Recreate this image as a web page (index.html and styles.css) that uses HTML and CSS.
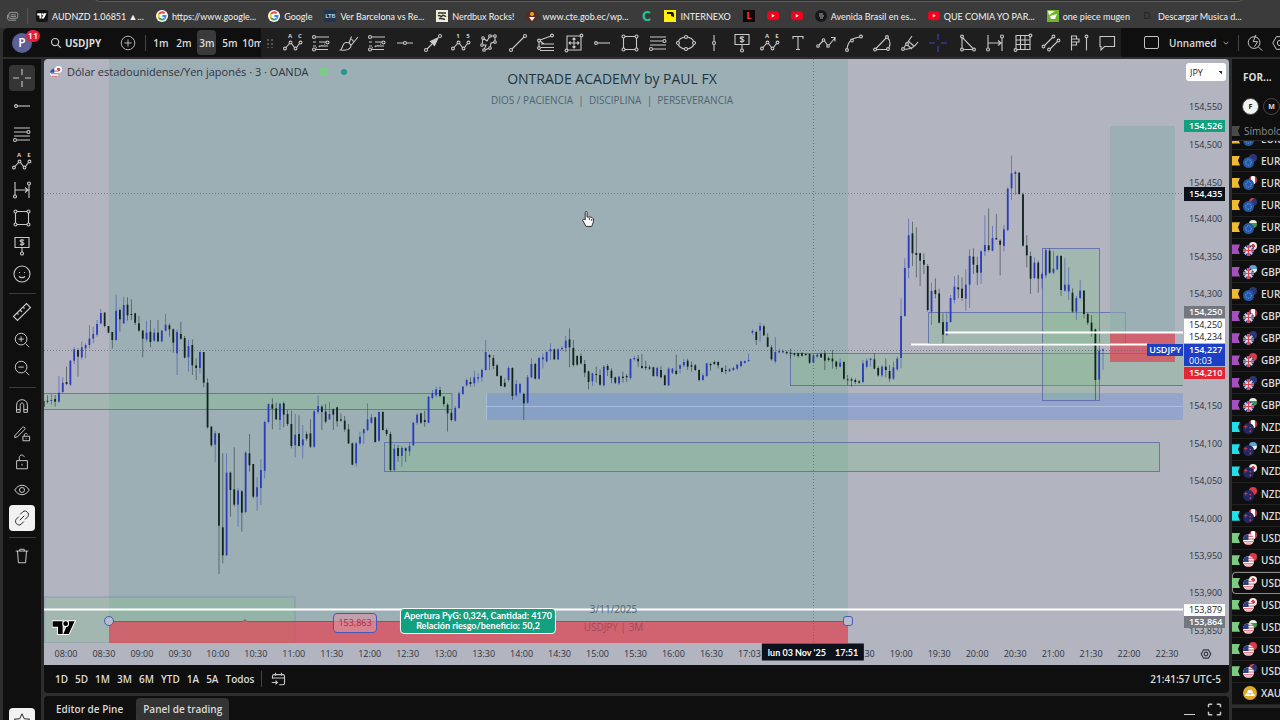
FILE: index.html
```html
<!DOCTYPE html>
<html lang="es">
<head>
    <meta charset="UTF-8">
    <meta name="viewport" content="width=device-width, initial-scale=1.0">
    <title>USDJPY 154,227 Unnamed</title>
    <link rel="stylesheet" href="styles.css">
</head>
<body>
    <!-- Icon sprite -->
    <svg class="sprite" aria-hidden="true">
        <symbol id="cross" viewBox="0 0 20 20"><path d="M10 1v6M10 13v6M1 10h6M13 10h6"/></symbol>
        <symbol id="ray" viewBox="0 0 20 20"><circle cx="4" cy="10" r="1.4"/><path d="M5.5 10H18"/></symbol>
        <symbol id="hline" viewBox="0 0 20 20"><circle cx="10" cy="10" r="1.5"/><path d="M2 10h6.500M11.500 10H18"/></symbol>
        <symbol id="vline" viewBox="0 0 20 20"><circle cx="10" cy="10" r="1.5"/><path d="M10 2v6.500M10 11.500V18"/></symbol>
        <symbol id="fib" viewBox="0 0 20 20"><path d="M2 4h16M2 8h13M2 12h16M5 16h13"/><circle cx="16.500" cy="8" r="1.500"/><circle cx="3" cy="16" r="1.500"/></symbol>
        <symbol id="fibext" viewBox="0 0 20 20"><path d="M4.500 4H18M2 9h3M8 9h7M2 13h3M8 13h9M4.500 16.500H17"/><path d="M5 15l9-4" stroke-dasharray="1 2"/><circle cx="3" cy="4" r="1.500"/><circle cx="16.500" cy="9.500" r="1.500"/><circle cx="3" cy="16.500" r="1.500"/></symbol>
        <symbol id="wave" viewBox="0 0 20 20"><path d="M3 14.500L6.500 10.500M8.500 10.500l3 4M13.500 14.500l3-4"/><circle cx="2" cy="15.500" r="1.400"/><circle cx="7.500" cy="9.500" r="1.400"/><circle cx="12.500" cy="15.500" r="1.400"/><circle cx="17.500" cy="9.500" r="1.400"/></symbol>
        <symbol id="brush" viewBox="0 0 20 20"><path d="M1.500 17C4 16 3 10 7 9.500c4-.5 6 3 4 5.500-2 2.500-6 2.500-9.500 2zM10 10l2.500-6.500M12 12.500l7-8.500M12.500 6l2 2.500"/></symbol>
        <symbol id="arrow" viewBox="0 0 20 20"><circle cx="3" cy="17" r="1.500"/><circle cx="17" cy="3" r="1.500"/><path d="M4 16l5-5"/><path class="solid" d="M15 5l-3.500 7.500-4-4z"/></symbol>
        <symbol id="path" viewBox="0 0 20 20"><path d="M4 5L8 8l3-5h5v6l-4 1-1 5-6 2 2-5H3z"/><circle class="knob" cx="4" cy="5" r="1.300"/><circle class="knob" cx="11" cy="3" r="1.300"/><circle class="knob" cx="16" cy="3" r="1.300"/><circle class="knob" cx="16" cy="9" r="1.300"/><circle class="knob" cx="11" cy="15" r="1.300"/><circle class="knob" cx="5" cy="17" r="1.300"/><circle class="knob" cx="3" cy="12" r="1.300"/></symbol>
        <symbol id="trend" viewBox="0 0 20 20"><circle cx="3" cy="17" r="1.500"/><circle cx="17" cy="3" r="1.500"/><path d="M4 16L16 4"/></symbol>
        <symbol id="fan" viewBox="0 0 20 20"><path d="M4 7L15 3M3 8.500v5M5 11h13M5 14.500h13M4 17.500h14M4 8l4 3"/><circle cx="3" cy="7.500" r="1.400"/><circle cx="16" cy="2.500" r="1.400"/><circle cx="3" cy="15" r="1.400"/></symbol>
        <symbol id="gann" viewBox="0 0 20 20"><path d="M3 3h14v14H3zM10 5v10M5 10h10M8.500 6.500L10 5l1.500 1.500M8.500 13.500L10 15l1.500-1.500M6.500 8.500L5 10l1.500 1.500M13.500 8.500L15 10l-1.500 1.500"/><circle class="knob" cx="17.500" cy="2.500" r="1.400"/><circle class="knob" cx="2.500" cy="17.500" r="1.400"/></symbol>
        <symbol id="rect" viewBox="0 0 20 20"><path d="M5 3.500h10M5 16.500h10M3.500 5v10M16.500 5v10"/><circle cx="3.500" cy="3.500" r="1.500"/><circle cx="16.500" cy="3.500" r="1.500"/><circle cx="3.500" cy="16.500" r="1.500"/><circle cx="16.500" cy="16.500" r="1.500"/></symbol>
        <symbol id="ellipse" viewBox="0 0 20 20"><ellipse cx="10" cy="10" rx="8" ry="6"/><circle class="knob" cx="10" cy="4" r="1.500"/><circle class="knob" cx="10" cy="16" r="1.500"/><circle class="knob" cx="2" cy="10" r="1.500"/><circle class="knob" cx="18" cy="10" r="1.500"/></symbol>
        <symbol id="note" viewBox="0 0 20 20"><path d="M3 1.500h14v10H3zM10 11.500V16M12 4.500c-1-1-4-1-4 .5s4 1 4 2.500-3 1.500-4 .5M10 3v7"/><circle cx="10" cy="17.500" r="1.500"/></symbol>
        <symbol id="text" viewBox="0 0 20 20"><path d="M5 6V3.500h10V6M10 3.500v13M8 16.500h4"/></symbol>
        <symbol id="zigarrow" viewBox="0 0 20 20"><path d="M3 12l4-4M8.500 8l3 4M13 12l6-7M15 4.500h4v4"/><circle cx="2" cy="13" r="1.300"/><circle cx="7.500" cy="7" r="1.300"/><circle cx="12" cy="13" r="1.300"/></symbol>
        <symbol id="curve" viewBox="0 0 20 20"><path d="M3 16C4 8 8 5 16 4"/><circle class="knob" cx="3" cy="17" r="1.400"/><circle class="knob" cx="8" cy="7.500" r="1.400"/><circle class="knob" cx="17" cy="3.500" r="1.400"/></symbol>
        <symbol id="arc" viewBox="0 0 20 20"><path d="M3 16.500L15 4C19 8 19 14 15 16.500z"/><circle class="knob" cx="3" cy="16.500" r="1.400"/><circle class="knob" cx="15" cy="4" r="1.400"/><circle class="knob" cx="16" cy="16" r="1.400"/></symbol>
        <symbol id="fork" viewBox="0 0 20 20"><path d="M3 16L12 3M3 16c6 1 11-1 15-7M6 11l6 5M8 8l6 5"/><circle class="knob" cx="3" cy="16" r="1.400"/><circle class="knob" cx="7" cy="11" r="1.400"/></symbol>
        <symbol id="triangle" viewBox="0 0 20 20"><path d="M5 4v12.500h12z"/><circle class="knob" cx="5" cy="3.500" r="1.400"/><circle class="knob" cx="5" cy="16.500" r="1.400"/><circle class="knob" cx="17" cy="16.500" r="1.400"/></symbol>
        <symbol id="range" viewBox="0 0 20 20"><path d="M3 2v13M17 5v13M3 10h13M13 7.500l3 2.500-3 2.500"/><circle class="knob" cx="3" cy="16.500" r="1.500"/><circle class="knob" cx="17" cy="3.500" r="1.500"/></symbol>
        <symbol id="grid" viewBox="0 0 20 20"><path d="M3 2.500h14v14H3zM7.500 2.500v14M12 2.500v14M3 7h14M3 11.500h14"/><circle class="knob" cx="17.500" cy="2.500" r="1.400"/><circle class="knob" cx="2.500" cy="17" r="1.400"/></symbol>
        <symbol id="channel" viewBox="0 0 20 20"><path d="M3 13l9-9M8 17l9-9"/><circle class="knob" cx="2.500" cy="13.500" r="1.400"/><circle class="knob" cx="12.500" cy="3.500" r="1.400"/><circle class="knob" cx="8" cy="16.500" r="1.400"/><circle class="knob" cx="17.500" cy="7.500" r="1.400"/></symbol>
        <symbol id="profile" viewBox="0 0 20 20"><path d="M2.500 17.500V3h5v3H10v3H7.500v3H2.500M2.500 6h5M2.500 9h5M17.500 5v12.500"/><circle class="knob" cx="17.500" cy="3.500" r="1.400"/></symbol>
        <symbol id="comment" viewBox="0 0 20 20"><path d="M3 3.500h14.500v10H7.500L4 17v-3.500H3z"/></symbol>
        <symbol id="smile" viewBox="0 0 20 20"><circle cx="10" cy="10" r="8"/><path d="M7.500 8v1M12.500 8v1M7 12.500c1.500 1.500 4.500 1.500 6 0"/></symbol>
        <symbol id="ruler" viewBox="0 0 20 20"><path d="M1.500 14.500l13-13 4 4-13 13zM5 11l1.500 1.500M8 8l2 2M11 5l1.500 1.500"/></symbol>
        <symbol id="zoomin" viewBox="0 0 20 20"><circle cx="9" cy="9" r="6.500"/><path d="M14 14l4 4M9 6v6M6 9h6"/></symbol>
        <symbol id="zoomout" viewBox="0 0 20 20"><circle cx="9" cy="9" r="6.500"/><path d="M14 14l4 4M6 9h6"/></symbol>
        <symbol id="magnet" viewBox="0 0 20 20"><path d="M4 17V9c0-8 12-8 12 0v8h-4V9c0-3-4-3-4 0v8zM4 14h4M12 14h4"/></symbol>
        <symbol id="penlock" viewBox="0 0 20 20"><path d="M2 12l8-9c2-2 4 0 3 2l-8 8-3 1zM11 12.500h7.500v5H11zM12.500 12.500V11c0-2 3.500-2 3.500-.5M14.500 14.500v1"/></symbol>
        <symbol id="lock" viewBox="0 0 20 20"><path d="M4 8.500h12v9H4zM7 8.500V5c0-3.500 5-3.500 5.500-.5M10 12v2"/></symbol>
        <symbol id="eye" viewBox="0 0 20 20"><path d="M2 10c4-7 12-7 16 0-4 7-12 7-16 0z"/><circle cx="10" cy="10" r="2.800"/></symbol>
        <symbol id="link" viewBox="0 0 20 20"><path d="M8 6l3-3c3.500-2.500 8 2 5.500 5.500l-3 3M12 14l-3 3c-3.500 2.500-8-2-5.500-5.500l3-3M7.500 12.500l5-5"/></symbol>
        <symbol id="trash" viewBox="0 0 20 20"><path d="M3 4.500h14M7.500 4.500V2.500h5v2M5 4.500l1 13h8l1-13"/></symbol>
        <symbol id="star" viewBox="0 0 20 20"><path d="M10 2l2.500 5.500 6 .5-4.500 4 1.500 6-5.500-3-5.500 3 1.500-6L1.500 8l6-.5z"/></symbol>
        <symbol id="search" viewBox="0 0 20 20"><circle cx="8.500" cy="8.500" r="6"/><path d="M13 13l5 5"/></symbol>
        <symbol id="plus" viewBox="0 0 20 20"><circle cx="10" cy="10" r="8.500"/><path d="M10 5.500v9M5.500 10h9"/></symbol>
        <symbol id="chevron" viewBox="0 0 20 20"><path d="M4 7.500l6 5.500 6-5.500"/></symbol>
        <symbol id="quick" viewBox="0 0 20 20"><circle cx="9" cy="9.500" r="6.500"/><path d="M14 14.500l4 4M11 1L8 8.500h5L9.500 14"/></symbol>
        <symbol id="calendar" viewBox="0 0 20 20"><path d="M2 9V5.500c0-1 .5-2 2-2h12c1.500 0 2 1 2 2V15c0 1.500-.5 2-2 2h-5M2 8h16M6 1v4M14 1v4M1 14h7M6 11.500L8.500 14 6 16.500"/></symbol>
        <symbol id="hexagon" viewBox="0 0 20 20"><path d="M6 3h8l4 7-4 7H6l-4-7z"/><circle cx="10" cy="10" r="3"/></symbol>
        <symbol id="expand" viewBox="0 0 20 20"><path d="M2 7V4c0-1 1-1 1-1h4M13 3h4c1 0 1 1 1 1v3M18 13v3c0 1-1 1-1 1h-4M7 17H3c-1 0-1-1-1-1v-3"/></symbol>
        <symbol id="google" viewBox="0 0 20 20"><circle class="white" cx="10" cy="10" r="10"/><path class="g-red" d="M5 7a6 6 0 0 1 9.500-1.500"/><path class="g-yellow" d="M5 7a6 6 0 0 0 0 6"/><path class="g-green" d="M5 13a6 6 0 0 0 9 1.500"/><path class="g-blue" d="M10.500 10H16c0 2-.5 3.500-2 4.500"/></symbol>
        <symbol id="youtube" viewBox="0 0 20 20"><rect class="yt" x="0" y="2" width="20" height="15" rx="5"/><path class="white" d="M8 6.500v6l5-3z"/></symbol>
        <symbol id="tv" viewBox="0 0 36 24"><path class="mark" d="M1 2h15v19H9V10H1zM25 21h-8l8-19h9z"/><circle class="mark" cx="20.500" cy="5.500" r="3.500"/></symbol>
        <symbol id="EUR" viewBox="0 0 12 12"><circle class="f-blue" cx="6" cy="6" r="6"/><circle class="f-ring" cx="6" cy="6" r="3"/></symbol>
        <symbol id="GBP" viewBox="0 0 12 12"><circle class="f-navy" cx="6" cy="6" r="6"/><path class="f-cross" d="M6 0v12M0 6h12M2 2l8 8M10 2l-8 8"/><path class="f-cross-red" d="M6 0v12M0 6h12"/></symbol>
        <symbol id="NZD" viewBox="0 0 12 12"><circle class="f-dark" cx="6" cy="6" r="6"/><path class="f-cross-red" d="M3 2v4M1 4h4"/><circle class="f-red" cx="8" cy="5" r="1"/><circle class="f-red" cx="8" cy="9" r="1"/></symbol>
        <symbol id="USD" viewBox="0 0 12 12"><circle class="white" cx="6" cy="6" r="6"/><path class="f-stripe" d="M5 2.500h6M5 5.500h7M1 8.500h10M3 11h6"/><path class="f-navy" d="M6 0v6.500H0A6 6 0 0 1 6 0z"/></symbol>
        <symbol id="XAU" viewBox="0 0 12 12"><circle class="f-gold" cx="6" cy="6" r="6"/><path class="white" d="M4.500 3.500h3L8.500 6h-5zM2.500 6.500h3l.5 2H1.800zM6.500 6.500h3l.7 2H6z"/></symbol>
    </svg>

    <nav class="bookmarks">
        <span class="address-edge"></span>
        <svg class="fav icon" viewBox="0 0 20 20"><rect x="3" y="4" width="15" height="10" rx="3"/><path d="M6 8h9M6 11h9M1 8v6c0 2 1 3 3 3h11"/></svg>
        <span class="sep"></span>
        <a href="#"><svg class="fav tvfav"><use href="#tv"/></svg>AUDNZD 1.06851 ▲...</a>
        <a href="#"><svg class="fav"><use href="#google"/></svg>https://www.google...</a>
        <a href="#"><svg class="fav"><use href="#google"/></svg>Google</a>
        <a href="#"><span class="fav fav-bar">LTB</span>Ver Barcelona vs Re...</a>
        <a href="#"><svg class="fav" viewBox="0 0 12 12"><rect class="paper" width="12" height="12"/><path class="ink" d="M2 3h8M2 6c2-2 3 2 4 0s3 1 4 0M3 9c2-2 4 1 6 0"/></svg>Nerdbux Rocks!</a>
        <a href="#"><svg class="fav" viewBox="0 0 12 12"><circle class="seal" cx="6" cy="6" r="6"/><circle class="f-gold" cx="6" cy="4" r="2"/><path class="white" d="M3 7h6l-3 4z"/></svg>www.cte.gob.ec/wp...</a>
        <a href="#" aria-label="C"><span class="fav fav-c">C</span></a>
        <a href="#"><svg class="fav" viewBox="0 0 12 12"><rect class="yellow" width="12" height="12"/><path class="dark" d="M3 2h5c2 0 2 2 2 5L7 6V4H3z"/></svg>INTERNEXO</a>
        <a href="#" aria-label="L"><span class="fav fav-l">L</span></a>
        <a href="#" aria-label="YouTube"><svg class="fav"><use href="#youtube"/></svg></a>
        <a href="#" aria-label="YouTube"><svg class="fav"><use href="#youtube"/></svg></a>
        <a href="#"><svg class="fav" viewBox="0 0 12 12"><circle class="dark" cx="6" cy="6" r="6"/><path class="lines" d="M4 4h4M4 6h5M5 8h3"/></svg>Avenida Brasil en es...</a>
        <a href="#"><svg class="fav"><use href="#youtube"/></svg>QUE COMIA YO PAR...</a>
        <a href="#"><svg class="fav" viewBox="0 0 12 12"><rect class="leaf" width="12" height="12"/><path class="white" d="M1 1h7L2 5zM3 6l7-2-2 5H4z"/></svg>one piece mugen</a>
        <a href="#"><span class="fav fav-dim">D.</span>Descargar Musica d...</a>
    </nav>

    <header class="topbar">
        <div class="symbol-area">
            <button class="avatar" aria-label="Perfil">P<span class="badge">11</span></button>
            <button class="symbol"><svg class="icon small"><use href="#search"/></svg>USDJPY</button>
            <button class="add" aria-label="Comparar"><svg class="icon add-icon"><use href="#plus"/></svg></button>
            <span class="sep"></span>
            <button class="interval">1m</button>
            <button class="interval">2m</button>
            <button class="interval active">3m</button>
            <button class="interval">5m</button>
            <button class="interval">10m</button>
        </div>
        <div class="drawbar">
            <span class="grip"></span>
            <button aria-label="ABCD"><svg class="icon"><use href="#wave"/><text x="7" y="5">A</text><text x="17" y="5">C</text></svg></button>
            <button aria-label="Extensión de Fibonacci"><svg class="icon"><use href="#fibext"/></svg></button>
            <button aria-label="Pincel"><svg class="icon"><use href="#brush"/></svg></button>
            <button aria-label="Retroceso"><svg class="icon"><use href="#fibext"/></svg></button>
            <button aria-label="Línea horizontal"><svg class="icon"><use href="#hline"/></svg></button>
            <button aria-label="Flecha"><svg class="icon"><use href="#arrow"/></svg></button>
            <button aria-label="Impulso"><svg class="icon"><use href="#wave"/><text x="7" y="5">1</text><text x="17" y="5">5</text></svg></button>
            <button aria-label="Trazado"><svg class="icon"><use href="#path"/></svg></button>
            <button aria-label="Línea de tendencia"><svg class="icon"><use href="#trend"/></svg></button>
            <button aria-label="Canal de Fibonacci"><svg class="icon"><use href="#fan"/></svg></button>
            <button aria-label="Caja de Gann"><svg class="icon"><use href="#gann"/></svg></button>
            <button aria-label="Rayo horizontal"><svg class="icon"><use href="#ray"/></svg></button>
            <button aria-label="Rectángulo"><svg class="icon"><use href="#rect"/></svg></button>
            <button aria-label="Fibonacci"><svg class="icon"><use href="#fib"/></svg></button>
            <button aria-label="Elipse"><svg class="icon"><use href="#ellipse"/></svg></button>
            <button aria-label="Línea vertical"><svg class="icon"><use href="#vline"/></svg></button>
            <button aria-label="Nota de precio"><svg class="icon"><use href="#note"/></svg></button>
            <button aria-label="Onda"><svg class="icon"><use href="#wave"/><text x="7" y="5">A</text><text x="17" y="5">E</text></svg></button>
            <button aria-label="Texto"><svg class="icon"><use href="#text"/></svg></button>
            <button aria-label="Ruta"><svg class="icon"><use href="#zigarrow"/></svg></button>
            <button aria-label="Curva"><svg class="icon"><use href="#curve"/></svg></button>
            <button aria-label="Arco"><svg class="icon"><use href="#arc"/></svg></button>
            <button aria-label="Abanico"><svg class="icon"><use href="#fork"/></svg></button>
            <button class="picked" aria-label="Cruz"><svg class="icon"><use href="#cross"/></svg></button>
            <button aria-label="Triángulo"><svg class="icon"><use href="#triangle"/></svg></button>
            <button aria-label="Rango de fechas"><svg class="icon"><use href="#range"/></svg></button>
            <button aria-label="Cuadrícula"><svg class="icon"><use href="#grid"/></svg></button>
            <button aria-label="Canal paralelo"><svg class="icon"><use href="#channel"/></svg></button>
            <button aria-label="Perfil de volumen"><svg class="icon"><use href="#profile"/></svg></button>
            <button aria-label="Comentario"><svg class="icon"><use href="#comment"/></svg></button>
        </div>
        <div class="layout-area">
            <button class="layout-box" aria-label="Diseño"></button>
            <button class="layout-name">Unnamed<svg class="icon tiny"><use href="#chevron"/></svg></button>
            <span class="sep"></span>
            <button class="quick" aria-label="Búsqueda rápida"><svg class="icon"><use href="#quick"/></svg></button>
            <button class="quick" aria-label="Ajustes"><svg class="icon"><use href="#hexagon"/></svg></button>
        </div>
    </header>

    <main class="workspace">
        <aside class="tools">
            <button class="active" aria-label="Cruz"><svg class="icon"><use href="#cross"/></svg></button>
            <button aria-label="Rayo"><svg class="icon"><use href="#ray"/></svg></button>
            <button aria-label="Fibonacci"><svg class="icon"><use href="#fib"/></svg></button>
            <button aria-label="Onda"><svg class="icon"><use href="#wave"/><text x="7" y="5">A</text><text x="17" y="5">E</text></svg></button>
            <button aria-label="Rango"><svg class="icon"><use href="#range"/></svg></button>
            <button aria-label="Rectángulo"><svg class="icon"><use href="#rect"/></svg></button>
            <button aria-label="Nota"><svg class="icon"><use href="#note"/></svg></button>
            <button aria-label="Iconos"><svg class="icon"><use href="#smile"/></svg></button>
            <hr>
            <button aria-label="Medir"><svg class="icon"><use href="#ruler"/></svg></button>
            <button aria-label="Acercar"><svg class="icon mid"><use href="#zoomin"/></svg></button>
            <button aria-label="Alejar"><svg class="icon mid"><use href="#zoomout"/></svg></button>
            <hr>
            <button aria-label="Imán"><svg class="icon mid"><use href="#magnet"/></svg></button>
            <button aria-label="Modo dibujo"><svg class="icon mid"><use href="#penlock"/></svg></button>
            <button aria-label="Bloquear"><svg class="icon mid"><use href="#lock"/></svg></button>
            <button aria-label="Ocultar"><svg class="icon mid"><use href="#eye"/></svg></button>
            <button class="on" aria-label="Vincular"><svg class="icon mid"><use href="#link"/></svg></button>
            <hr>
            <button aria-label="Eliminar"><svg class="icon mid"><use href="#trash"/></svg></button>
            <button class="on favorites" aria-label="Favoritos"><svg class="icon mid"><use href="#star"/></svg></button>
        </aside>

        <div class="center">
            <section class="chart">
                <div class="plot">
                    <svg class="canvas" viewBox="44 59 1139 584" preserveAspectRatio="none">
                        <rect class="target" x="109" y="59" width="739" height="562"/>
                        <rect class="zone faint" x="44" y="597" width="251" height="46"/>
                        <rect class="risk" x="109" y="621" width="739" height="22"/>
                        <path class="risk-line" d="M109 621.500h739"/>
                        <rect class="demand" x="486" y="393" width="697" height="27"/>
                        <path class="demand-line" d="M486 406.500h697M486.500 393v27"/>
                        <rect class="zone" x="34" y="393.500" width="418" height="16"/>
                        <rect class="zone" x="384.500" y="442.500" width="775" height="29"/>
                        <rect class="zone" x="790.500" y="353.500" width="400" height="32"/>
                        <rect class="zone" x="928.500" y="312.500" width="197" height="31"/>
                        <rect class="zone" x="1042.500" y="248.500" width="57" height="152"/>
                        <rect class="target" x="1110" y="126" width="65" height="207"/>
                        <rect class="risk" x="1110" y="333" width="65" height="29"/>
                        <path class="dots" d="M44 193.500h1139M44 350.500h1139M813.500 59v584"/>
                        <g id="candles"></g>
                        <path class="level" d="M44 609.500h1139M945 332.500h238M911 344.500h236"/>
                    </svg>

                    <div class="legend">
                        <svg class="flag" viewBox="0 0 14 14"><circle class="white" cx="10" cy="4" r="4"/><circle class="f-red" cx="10" cy="4" r="2"/><circle class="white" cx="5" cy="8" r="5"/><path class="f-stripe" d="M4 6h6M1 9h9M2 12h6"/><path class="f-blue" d="M5 3v5H0a5 5 0 0 1 5-5z"/></svg>
                        <span>Dólar estadounidense/Yen japonés · 3 · OANDA</span>
                        <i class="square"></i>
                        <i class="dot"></i>
                    </div>
                    <div class="watermark top">
                        <h1>ONTRADE ACADEMY by PAUL FX</h1>
                        <p>DIOS / PACIENCIA &nbsp;|&nbsp; DISCIPLINA &nbsp;|&nbsp; PERSEVERANCIA</p>
                    </div>
                    <div class="watermark bottom">
                        <p>3/11/2025</p>
                        <p class="pair-name">USDJPY | 3M</p>
                    </div>

                    <span class="pin handle" data-x="109" data-y="621"></span>
                    <span class="pin handle box" data-x="848" data-y="621"></span>
                    <span class="pin speck" data-x="245" data-y="621"></span>
                    <span class="pin entry" data-x="355" data-y="623">153,863</span>
                    <div class="pin pnl" data-x="478" data-y="621">Apertura PyG: 0,324, Cantidad: 4170<br>Relación riesgo/beneficio: 50,2</div>
                    <svg class="pin logo" data-x="64" data-y="628"><use href="#tv"/></svg>
                    <svg class="pin hand" data-x="588" data-y="219" viewBox="0 0 14 18"><path d="M4 10V2c0-1.500 2-1.500 2 0v5c2-.5 6 0 7 2 0 4-1 5-2 8H5L1.500 11c-1-1.500 1-2.500 2.500-1zM8.500 8v2M11 9v2"/></svg>
                    <span class="ticker">USDJPY</span>
                </div>
                <div class="price-axis" id="prices">
                    <select aria-label="Moneda"><option>JPY</option></select>
                </div>
                <div class="time-axis">
                    <div class="times" id="times"></div>
                    <span class="pin time-tag" data-x="813"><span>lun 03 Nov '25</span><span>17:51</span></span>
                </div>
                <button class="axis-menu" aria-label="Configurar escala"><svg class="icon small"><use href="#hexagon"/></svg></button>
            </section>

            <div class="ranges">
                <button>1D</button><button>5D</button><button>1M</button><button>3M</button><button>6M</button><button>YTD</button><button>1A</button><button>5A</button><button>Todos</button>
                <span class="sep"></span>
                <button aria-label="Ir a"><svg class="icon goto"><use href="#calendar"/></svg></button>
                <button class="clock">21:41:57 UTC-5</button>
            </div>
            <footer class="panels">
                <button>Editor de Pine</button>
                <button class="active">Panel de trading</button>
                <button class="minimize" aria-label="Minimizar"></button>
                <button class="maximize" aria-label="Maximizar"><svg class="icon small"><use href="#expand"/></svg></button>
            </footer>
        </div>

        <aside class="watchlist">
            <button class="list-name">FOR...<svg class="icon tiny"><use href="#chevron"/></svg></button>
            <div class="views"><button class="view on">F</button><button class="view">M</button></div>
            <div class="col-head"><i class="mark-flag"></i>Símbolo</div>
            <div class="cut"><div class="row yellow"><i class="mark-flag"></i><span class="pair"><svg class="base"><use href="#EUR"/></svg></span>EUR</div></div>
            <div class="rows" id="rows"></div>
            <div class="list-foot"></div>
        </aside>
    </main>
    <script src="chart.js"></script>
</body>
</html>
```

FILE: styles.css
```css
* {
    box-sizing: border-box;
}
body {
    margin: 0;
    height: 100vh;
    overflow: hidden;
    display: flex;
    flex-direction: column;
    background: #2e2e2e;
    color: #dbdbdb;
    font-family: "Open Sans", "Noto Sans", sans-serif;
    font-size: 10px;
}
button {
    border: none;
    background: none;
    color: inherit;
    font: inherit;
    font-weight: 600;
    padding: 0;
    cursor: pointer;
}
.sprite {
    position: absolute;
    width: 0;
    height: 0;
}
.icon {
    width: 20px;
    height: 20px;
    flex: none;
    display: block;
    fill: none;
    stroke: #c8c8c8;
    stroke-width: 1.1;
}
.icon text {
    fill: #d0d0d0;
    stroke: none;
    font-size: 6px;
    font-weight: 700;
    text-anchor: middle;
}
.icon.mid {
    width: 18px;
    height: 18px;
}
.icon.small {
    width: 12px;
    height: 12px;
    stroke-width: 2;
}
.icon.tiny {
    width: 8px;
    height: 8px;
    stroke-width: 2;
}
.solid {
    fill: #d0d0d0;
}
.knob {
    fill: #1c1c1c;
}
.sep {
    flex: none;
    width: 1px;
    height: 16px;
    background: #444444;
}
.white {
    fill: #ffffff;
    stroke: none;
}
.dark {
    fill: #15171a;
}

/* Bookmarks */
.bookmarks {
    position: relative;
    flex: none;
    height: 28px;
    padding: 4px 0 0 7px;
    display: flex;
    align-items: center;
    gap: 12px;
    background: #3b3b3b;
    overflow: hidden;
}
.bookmarks .sep {
    margin: 0 -4px 0 -4px;
    background: #565656;
}
.bookmarks a {
    display: flex;
    align-items: center;
    gap: 4px;
    flex: none;
    color: #f2f2f2;
    text-decoration: none;
    white-space: nowrap;
    font-family: Lato, "Open Sans", sans-serif;
    font-size: 9px;
}
.address-edge {
    position: absolute;
    left: 92px;
    right: 34px;
    top: -10px;
    height: 12px;
    border: 1px solid #5c5c5c;
    border-radius: 0 0 8px 8px;
    background: #2c2c2c;
}
.fav {
    width: 12px;
    height: 12px;
    flex: none;
    line-height: 12px;
    text-align: center;
}
.tvfav {
    background: #131313;
    padding: 2px 1px;
    border-radius: 2px;
    fill: #ffffff;
}
.fav-bar {
    background: #20354f;
    color: #b9d5f5;
    font-size: 6px;
    font-weight: 700;
}
.fav-c {
    color: #1fc79a;
    font-size: 13px;
    font-weight: 800;
}
.fav-l {
    background: #100808;
    color: #ee3b30;
    font-weight: 800;
}
.fav-dim {
    color: #222222;
}
.paper {
    fill: #eeeed8;
}
.ink {
    fill: none;
    stroke: #333333;
    stroke-width: 1.5;
}
.lines {
    stroke: #aaaaaa;
}
.seal {
    fill: #5c2a20;
}
.yellow {
    fill: #ffee10;
}
.leaf {
    fill: #6fb52c;
}
.yt {
    fill: #f4001c;
}
.g-red, .g-yellow, .g-green, .g-blue {
    fill: none;
    stroke-width: 3;
}
.g-red {
    stroke: #ea4335;
}
.g-yellow {
    stroke: #fbbc05;
}
.g-green {
    stroke: #34a853;
}
.g-blue {
    stroke: #4285f4;
}

/* Top bar */
.topbar {
    flex: none;
    height: 29px;
    margin-left: 3px;
    display: flex;
    background: #0f0f0f;
    border-top-left-radius: 5px;
}
.symbol-area {
    width: 258px;
    flex: none;
    display: flex;
    align-items: center;
    overflow: hidden;
}
.avatar {
    position: relative;
    width: 20px;
    height: 20px;
    margin-left: 9px;
    flex: none;
    border-radius: 50%;
    background: #5a6199;
    color: #ffffff;
    font-size: 12px;
}
.badge {
    position: absolute;
    left: 14px;
    top: -3px;
    width: 14px;
    height: 12px;
    border-radius: 6px;
    background: #e0203c;
    font-size: 9px;
    line-height: 12px;
}
.symbol {
    display: flex;
    align-items: center;
    gap: 3px;
    width: 54px;
    margin-left: 18px;
    font-weight: 700;
}
.add {
    margin-left: 19px;
    width: 16px;
}
.add-icon {
    width: 16px;
    height: 16px;
}
.symbol-area .sep {
    margin: 0 3px 0 9px;
}
.interval {
    flex: none;
    width: 23px;
    height: 25px;
    white-space: nowrap;
}
.interval.active {
    width: 19px;
    margin: 0 2px;
    border-radius: 4px;
    background: #3a3a3a;
}
.drawbar {
    flex: 1;
    display: flex;
    align-items: center;
    background: #1e1e1e;
}
.drawbar button {
    flex: 1;
    display: flex;
    justify-content: center;
}
.grip {
    width: 8px;
    height: 10px;
    margin: 0 5px 0 5px;
    background: radial-gradient(circle, #555555 1px, transparent 1px) 0 0 / 4px 4px;
}
.picked .icon {
    stroke: #3a44c8;
}
.layout-area {
    width: 159px;
    flex: none;
    display: flex;
    align-items: center;
    overflow: hidden;
}
.layout-box {
    flex: none;
    width: 15px;
    height: 13px;
    margin: 0 10px 0 23px;
    border: 1px solid #c4c4c4;
    border-radius: 2px;
}
.layout-name {
    display: flex;
    align-items: center;
    justify-content: space-between;
    width: 61px;
    flex: none;
    margin-right: 8px;
}
.quick {
    margin-left: 7px;
    flex: none;
}
.quick .icon {
    width: 18px;
    height: 18px;
}

/* Workspace */
.workspace {
    flex: 1;
    min-height: 0;
    display: grid;
    grid-template-columns: 38px 1fr 48px;
    gap: 3px;
    padding: 2px 0 0 3px;
}
.tools {
    display: flex;
    flex-direction: column;
    align-items: center;
    padding-top: 5px;
    background: #0f0f0f;
    overflow: hidden;
}
.tools button {
    flex: none;
    width: 26px;
    height: 26px;
    margin: 1px 0;
    border-radius: 4px;
    display: flex;
    align-items: center;
    justify-content: center;
}
.tools .active {
    background: #353535;
}
.tools .on {
    background: #f2f2f2;
}
.tools .on .icon {
    stroke: #222222;
}
.tools hr {
    flex: none;
    width: 27px;
    height: 1px;
    margin: 5px 0 4px;
    border: none;
    background: #3c3c3c;
}
.tools .favorites {
    margin: auto 0 -14px;
}
.center {
    min-width: 0;
    min-height: 0;
    display: flex;
    flex-direction: column;
}
.chart {
    flex: 1;
    min-height: 0;
    display: grid;
    grid-template-columns: 1fr 46px;
    grid-template-rows: 1fr 22px;
    background: #b2b4c0;
    border-radius: 4px 4px 0 0;
    overflow: hidden;
    color: #30343f;
}
.plot {
    position: relative;
    min-width: 0;
    min-height: 0;
}
.canvas {
    position: absolute;
    width: 100%;
    height: 100%;
}
.target {
    fill: #8eadaf;
    fill-opacity: .62;
}
.risk {
    fill: #dc4450;
    fill-opacity: .72;
}
.risk-line {
    stroke: #b84252;
}
.zone {
    fill: #7fbf87;
    fill-opacity: .3;
    stroke: #5a5fa8;
    stroke-opacity: .75;
}
.zone.faint {
    stroke-opacity: .3;
}
.demand {
    fill: #6b8fdc;
    fill-opacity: .42;
}
.demand-line {
    fill: none;
    stroke: #b8cbe6;
    stroke-opacity: .7;
}
.dots {
    fill: none;
    stroke: #5d6470;
    stroke-dasharray: 1 2;
    stroke-opacity: .7;
}
.level {
    stroke: #ffffff;
    stroke-width: 2;
}
.up {
    fill: #2a3cb8;
}
.down {
    fill: #10241f;
}
.wick {
    opacity: .6;
}
.legend {
    position: relative;
    display: flex;
    align-items: center;
    width: max-content;
    gap: 5px;
    padding: 4px 0 0 6px;
    font-size: 11px;
    line-height: 17px;
}
.flag {
    width: 12px;
    height: 12px;
}
.legend .square {
    width: 8px;
    height: 8px;
    margin-left: 6px;
    background: #7ccb86;
}
.legend .dot {
    width: 6px;
    height: 6px;
    margin-left: 8px;
    border-radius: 50%;
    background: #1f9b86;
}
.watermark {
    position: absolute;
    left: 0;
    right: 0;
    text-align: center;
    color: #4d6670;
}
.watermark.top {
    top: 10px;
    padding-right: 3px;
}
.watermark.bottom {
    bottom: 7px;
}
.watermark h1 {
    margin: 0;
    color: #1d3540;
    font-size: 14px;
    font-weight: 400;
    line-height: 20px;
}
.watermark p {
    margin: 0;
    font-size: 10px;
    line-height: 18px;
}
.watermark.top p {
    margin-top: 2px;
}
.watermark .pair-name {
    color: #a24a5c;
}
.pin {
    position: absolute;
    transform: translate(-50%, -50%);
}
.handle {
    width: 10px;
    height: 10px;
    border: 1px solid #4558b8;
    border-radius: 50%;
    background: #b4bccb;
}
.handle.box {
    border-radius: 3px;
}
.speck {
    width: 3px;
    height: 3px;
    border: 1px solid #8f2436;
    background: #ffffff;
}
.entry {
    width: 44px;
    height: 20px;
    border: 1px solid #4558b8;
    border-radius: 4px;
    background: rgba(220, 150, 165, .6);
    color: #b0283c;
    font-size: 9px;
    line-height: 18px;
    text-align: center;
}
.pnl {
    padding: 2px 3px;
    border: 1px solid #ffffff;
    border-radius: 4px;
    background: #13a07f;
    color: #ffffff;
    font-family: Lato, "Open Sans", sans-serif;
    font-size: 9px;
    font-weight: 700;
    line-height: 10px;
    text-align: center;
    white-space: nowrap;
}
.logo {
    width: 24px;
    height: 16px;
    fill: #000000;
    stroke: #ffffff;
    stroke-width: 3;
    paint-order: stroke;
}
.hand {
    width: 13px;
    height: 17px;
    fill: #ffffff;
    stroke: #222222;
}
.ticker {
    position: absolute;
    right: 0;
    top: 50%;
    margin-top: -7px;
    padding: 0 2px;
    background: #1c3fc6;
    color: #ffffff;
    font-size: 9px;
    font-weight: 600;
    line-height: 12px;
}
.price-axis {
    position: relative;
    font-size: 9px;
}
.price-axis select {
    appearance: none;
    display: block;
    width: 40px;
    height: 18px;
    margin: 4px 0 0 3px;
    padding: 0 4px;
    border: none;
    border-radius: 3px;
    background: #ffffff linear-gradient(45deg, transparent 50%, #333333 50%) no-repeat right 4px center / 3px 3px;
    color: #222222;
    font: inherit;
}
.price {
    position: absolute;
    left: 1px;
    width: 41px;
    padding-left: 5px;
    line-height: 12px;
    transform: translateY(-50%);
}
.price.profit {
    background: #13a07f;
}
.price.cursor {
    background: #0d111c;
    line-height: 14px;
}
.price.gray {
    background: #75777f;
}
.price.plain {
    background: #ffffff;
    color: #222222;
}
.price.last {
    background: #1c3fc6;
    line-height: 11px;
}
.price.loss {
    background: #e32634;
}
.price.profit, .price.cursor, .price.gray, .price.last, .price.loss {
    color: #ffffff;
    font-weight: 600;
}
.price small {
    display: block;
    font-size: 9px;
    font-weight: 400;
}
.time-axis {
    position: relative;
}
.times {
    display: grid;
    grid-auto-flow: column;
    grid-auto-columns: 1fr;
    margin: 0 -3px 0 3px;
    text-align: center;
    font-size: 9px;
    line-height: 22px;
}
.times b {
    font-weight: 500;
}
.time-tag {
    top: 9px;
    display: flex;
    gap: 9px;
    padding: 0 6px;
    background: #0d111c;
    color: #ffffff;
    font-family: Lato, "Open Sans", sans-serif;
    font-size: 9px;
    font-weight: 700;
    line-height: 17px;
    white-space: nowrap;
}
.axis-menu {
    display: flex;
    align-items: center;
    justify-content: center;
    z-index: 1;
}
.axis-menu .icon {
    stroke: #333844;
}

/* Bottom bars */
.ranges, .panels {
    flex: none;
    display: flex;
    align-items: center;
    background: #0f0f0f;
}
.ranges {
    height: 28px;
    gap: 7px;
    padding: 0 8px 0 11px;
    border-radius: 0 0 4px 4px;
}
.goto {
    width: 15px;
    height: 15px;
    margin-left: 2px;
    stroke-width: 1.5;
}
.clock {
    margin-left: auto;
}
.panels {
    height: 24px;
    margin-top: 3px;
    padding: 0 7px 0 4px;
    border-radius: 4px 4px 0 0;
}
.panels button {
    height: 22px;
    margin-top: 2px;
    padding: 0 8px;
}
.panels .active {
    margin-left: 5px;
    padding: 0 7px;
    border-radius: 4px 4px 0 0;
    background: #343434;
}
.panels .minimize {
    width: 11px;
    height: 1px;
    margin: 12px 12px 0 auto;
    padding: 0;
    background: #d0d0d0;
}
.panels .maximize {
    padding: 0;
}
.maximize .icon {
    width: 15px;
    height: 15px;
}

/* Watchlist */
.watchlist {
    display: flex;
    flex-direction: column;
    min-height: 0;
    background: #0f0f0f;
    overflow: hidden;
    white-space: nowrap;
}
.list-name {
    display: flex;
    align-items: center;
    gap: 8px;
    height: 36px;
    padding-left: 11px;
    flex: none;
    font-weight: 700;
}
.views {
    display: flex;
    gap: 4px;
    height: 22px;
    align-items: center;
    padding-left: 10px;
    flex: none;
}
.view {
    flex: none;
    width: 17px;
    height: 17px;
    border: 1px solid #4a4a4a;
    border-radius: 50%;
    font-size: 7px;
    font-weight: 700;
}
.view.on {
    background: #f2f2f2;
    color: #222222;
}
.col-head {
    display: flex;
    align-items: center;
    gap: 4px;
    height: 24px;
    padding-top: 5px;
    flex: none;
    border-bottom: 1px solid #2a2a2a;
    color: #8c8c8c;
}
.cut {
    height: 9px;
    flex: none;
    display: flex;
    align-items: flex-end;
    overflow: hidden;
}
.cut .row {
    height: 22px;
}
.rows {
    flex: 1;
    min-height: 0;
    display: grid;
    grid-auto-rows: 1fr;
}
.row {
    display: flex;
    align-items: center;
    gap: 3px;
    min-height: 0;
    border-bottom: 1px solid #212121;
    font-weight: 600;
}
.row.selected {
    border: 1px solid #8a8a8a;
    border-right: none;
    border-radius: 4px 0 0 4px;
}
.row.selected .mark-flag {
    margin-left: -1px;
}
.mark-flag {
    flex: none;
    width: 8px;
    height: 10px;
    background: #4a4a4a;
    clip-path: polygon(0 0, 100% 0, 75% 50%, 100% 100%, 0 100%);
}
.yellow .mark-flag {
    background: #f0bb30;
}
.purple .mark-flag {
    background: #a64fc0;
}
.cyan .mark-flag {
    background: #1fe0ea;
}
.green .mark-flag {
    background: #7bcb80;
}
.none .mark-flag {
    background: none;
}
.pair {
    position: relative;
    width: 15px;
    height: 14px;
    flex: none;
}
.pair .quote {
    position: absolute;
    right: 1px;
    top: 0;
    width: 8px;
    height: 8px;
    border-radius: 50%;
}
.pair .base {
    position: absolute;
    left: 0;
    bottom: 0;
    width: 11px;
    height: 11px;
}
.pair .base.gold {
    width: 14px;
    height: 14px;
}
.quote.navy {
    background: #2b3672;
}
.quote.red {
    background: #d83a4a;
}
.quote.jpy {
    background: radial-gradient(circle, #d83a4a 30%, #f3e9ea 32%);
}
.quote.cad {
    background: linear-gradient(90deg, #d83a4a 30%, #ffffff 30% 70%, #d83a4a 70%);
}
.quote.aud {
    background: linear-gradient(135deg, #d83a4a 35%, #2b3672 35%);
}
.quote.blue {
    background: linear-gradient(#5fa3dc 50%, #e4edf5 50%);
}
.quote.lime {
    background: linear-gradient(#e9f0e4 40%, #3f9a4c 40%);
}
.f-blue {
    fill: #2357a8;
}
.f-navy {
    fill: #2b3f80;
}
.f-dark {
    fill: #1d2a66;
}
.f-ring {
    fill: none;
    stroke: #8fb8e8;
    stroke-dasharray: 1 1;
}
.f-cross, .f-cross-red, .f-stripe {
    fill: none;
    stroke: #e9d3da;
    stroke-width: 2;
}
.f-cross-red, .f-stripe {
    stroke: #d83a4a;
    stroke-width: 1;
}
.f-red {
    fill: #d83a4a;
}
.f-gold {
    fill: #e2aa2a;
}
.list-foot {
    flex: none;
    height: 15px;
    border-top: 3px solid #2e2e2e;
}
```

FILE: chart.js
```js
// direction (b = up, k = down), high, body top, body bottom, low
// heights are in thirds of a unit below y = 290
const candleData = `
k330,333,350,352 k316,332,335,340 b312,330,332,345 k315,327,335,350 b258,308,335,338 b262,278,306,310 k230,276,282,285
b210,212,284,288 b172,178,212,222 k175,180,200,260 b155,172,202,208 b160,165,175,205 b105,146,165,175 b110,132,146,160
b90,102,134,140 b57,69,100,104 k66,68,108,112 k108,108,128,130 k126,126,150,175 b14,62,150,152 k55,60,88,125
b20,45,100,102 k22,44,76,92 k28,72,74,90 k68,70,98,105 k78,100,122,125 k120,122,146,202 b92,128,148,155
k90,125,156,172 b115,128,152,155 k90,128,154,156 b120,122,154,157 b72,104,122,124 k100,106,118,140 k115,118,158,188
b118,126,190,255 k95,132,146,150 k138,144,203,205 b150,168,202,245 k148,165,226,255 k205,226,234,270 b185,186,234,250
k186,186,278,292 k265,278,412,416 k408,410,466,470 b422,430,464,516 k428,430,707,852 k490,712,796,820 b490,548,796,798
k545,548,600,680 k472,598,644,650 b595,602,644,710 k600,604,668,725 b483,488,666,670 k432,490,526,545 k522,522,620,625
b562,592,620,662 b508,540,594,645 b392,396,542,565 b340,342,396,400 k325,343,356,418 k338,355,388,390 b340,341,390,420
k335,340,374,412 k360,372,402,408 k362,402,468,475 b372,434,466,502 k376,432,468,470 b405,448,466,505 k425,432,446,452
k388,430,470,474 b360,364,470,474 b316,348,366,372 k345,350,366,420 k342,365,395,400 b336,372,388,390 k355,358,374,420
k350,352,394,410 k370,388,392,395 k378,392,418,425 k402,418,460,462 k458,460,524,526 b455,460,520,530 b425,440,460,464
b415,418,430,462 b340,388,420,424 b372,382,398,402 k380,382,456,458 b365,366,452,456 k364,366,420,422 k415,420,432,438
k425,432,540,545 b462,476,540,543 k465,474,498,515 b468,474,498,530 k472,475,482,516 b456,468,484,498 b396,398,466,468
b370,374,398,404 k368,370,398,402 k362,390,396,410 b318,320,398,400 b300,310,324,328 b290,298,316,322 k290,300,318,322
k318,320,342,350 k340,344,370,425 k358,368,390,394 b348,354,392,395 b305,310,354,356 b288,290,312,315 b266,270,286,290
k262,276,282,290 b242,262,280,290 b250,262,266,278 b236,240,262,275 b150,186,240,242 k192,195,202,240 k195,204,228,238
k222,226,258,260 k255,258,288,290 k265,278,290,292 b228,234,270,275 k232,234,318,330 b270,282,316,320 b278,282,308,312
k308,312,340,390 b255,262,338,340 b205,222,262,265 k218,222,266,268 b200,204,266,270 b190,202,208,235 b184,186,214,218
b160,178,184,210 k176,178,208,210 b175,178,208,210 b168,174,178,182 b138,152,174,186 k115,148,172,232 k150,174,225,230
k195,198,224,228 k190,198,220,224 k210,222,248,262 k242,244,276,298 b248,250,274,288 k230,252,255,278 k238,255,284,288
b225,230,286,290 k222,228,240,258 k235,242,264,280 k260,262,278,282 b258,260,280,284 k245,260,264,278 k252,258,262,276
b205,207,264,270 b198,204,208,212 k195,206,214,230 k192,228,234,236 k212,230,234,240 k226,232,236,240 k230,232,258,260
b230,234,258,262 k228,240,262,264 k254,256,285,288 b232,236,286,288 b234,236,248,252 k194,242,252,255 b222,226,236,250
b206,216,226,232 k206,212,230,240 k215,226,230,245 k222,226,240,243 k238,240,270,274 b250,256,270,272 b218,220,258,260
k218,222,226,242 k212,216,222,225 k214,216,226,235 k232,234,246,248 k226,240,243,252 b234,238,244,246 b230,234,240,243
b222,224,236,240 b212,214,228,232 b212,213,219,221 b190,210,213,215 b118,123,128,133 k122,126,150,165 b98,108,122,155
k104,109,136,138 k130,142,170,172 k165,172,208,212 b142,186,214,220 b176,183,187,190 b178,183,187,190 k182,186,190,193
k176,188,190,205 k188,190,194,200 k188,190,198,203 k186,190,197,200 k190,192,195,198 k190,192,218,222 b192,196,218,220
b190,194,200,204 k188,192,202,204 k182,190,212,240 k200,205,210,215 k180,206,214,236 k212,215,230,238 b205,218,230,232
k214,216,266,270 k255,268,270,286 k262,268,272,290 k265,270,276,282 k270,274,278,282 b210,220,276,280 b205,212,230,235
b203,206,210,230 k190,208,236,238 k228,234,256,260 b225,230,256,262 k205,230,240,262 k225,243,266,275 b215,232,266,270
b200,206,238,242 b25,78,204,235 b-95,-66,78,80 b-214,-164,-66,-35 k-205,-170,-110,-72 k-188,-111,-105,-38 k-112,-110,-88,-12
k-110,-90,-76,-48 k-78,-72,60,65 b-22,3,65,105 k-35,0,12,25 k-4,10,98,100 k70,96,134,160 b65,96,134,138 b15,24,96,98
b-42,-10,30,40 k-45,-8,-2,25 k-38,-4,24,32 b-62,-16,26,62 b-122,-102,-16,54 k-125,-100,-76,-48 k-100,-75,-52,-15
b-120,-116,-52,-18 b-224,-135,-116,-102 k-245,-134,-120,-116 b-192,-156,-118,-116 k-228,-156,-152,-150 k-152,-148,-136,-44
b-195,-182,-132,-116 b-308,-304,-180,-176 b-403,-350,-305,-270 b-358,-354,-348,-285 k-354,-352,-288,-286
k-292,-287,-133,-130 k-165,-134,-104,-68 k-115,-102,-34,12 b-98,-82,-36,-32 k-88,-82,-34,8 b-52,-48,-34,-5
b-124,-120,-44,-35 k-125,-118,-52,-48 b-118,-64,-52,-48 b-105,-102,-62,-58 k-105,-102,0,18 b-95,-16,2,5 b-68,-16,4,30
k-5,8,65,68 b18,24,65,90 b-30,2,24,28 k0,2,72,85 k68,72,98,105 k75,98,124,140 k116,118,270,330 b178,182,268,272
b176,178,182,240`.trim().split(/\s+/);

const view = { x: 44, y: 59, width: 1139, height: 584 };
const firstX = 43.7;
const lastX = 1103;
const step = (lastX - firstX) / (candleData.length - 1);

document.getElementById('candles').innerHTML = candleData.map((item, i) => {
    const dir = item[0] === 'b' ? 'up' : 'down';
    const [high, top, bottom, low] = item.slice(1).split(',').map(v => 290 + v / 3);
    const x = firstX + i * step;
    return `<rect class="${dir} wick" x="${x - 0.4}" y="${high}" width="0.8" height="${low - high}"/>` +
        `<rect class="${dir}" x="${x - 0.9}" y="${top}" width="1.8" height="${Math.max(bottom - top, 1)}"/>`;
}).join('');

// Place the marks that lie over the plot
document.querySelectorAll('.pin').forEach(pin => {
    pin.style.left = (pin.dataset.x - view.x) / view.width * 100 + '%';
    if (pin.dataset.y) {
        pin.style.top = (pin.dataset.y - view.y) / view.height * 100 + '%';
    }
});

const prices = [
    ['154,550', 107], ['154,500', 145], ['154,450', 183], ['154,400', 219], ['154,350', 257],
    ['154,300', 294], ['154,150', 406], ['154,100', 444], ['154,050', 481], ['154,000', 519],
    ['153,950', 556], ['153,900', 593], ['153,850', 631],
    ['154,526', 126, 'profit'], ['154,435', 194, 'cursor'], ['154,250', 312, 'gray'],
    ['154,250', 325, 'plain'], ['154,234', 337, 'plain'], ['154,227<small>00:03</small>', 355, 'last'],
    ['154,210', 373, 'loss'], ['153,879', 610, 'plain'], ['153,864', 622, 'gray']
];
document.getElementById('prices').insertAdjacentHTML('beforeend', prices.map(([text, y, kind = '']) =>
    `<span class="price ${kind}" style="top: ${(y - view.y) / view.height * 100}%">${text}</span>`
).join(''));

// 17:30 and 18:00 stay empty, the cursor tag sits there
let times = '';
for (let i = 0; i < 30; i++) {
    const hour = String(8 + Math.floor(i / 2)).padStart(2, '0');
    let label = i === 18 ? '17:03' : hour + (i % 2 ? ':30' : ':00');
    if (i === 19 || i === 20) {
        label = '';
    }
    times += i % 2 ? `<span>${label}</span>` : `<b>${label}</b>`;
}
document.getElementById('times').innerHTML = times;

const rows = [
    ['yellow', 'EUR', 'navy'], ['yellow', 'EUR', 'cad'], ['yellow', 'EUR', 'aud'], ['yellow', 'EUR', 'lime'],
    ['purple', 'GBP', 'jpy'], ['purple', 'GBP', 'blue'], ['yellow', 'EUR', 'navy'], ['purple', 'GBP', 'cad'],
    ['purple', 'GBP', 'navy'], ['purple', 'GBP', 'red'], ['purple', 'GBP', 'navy'], ['purple', 'GBP', 'lime'],
    ['cyan', 'NZD', 'cad'], ['cyan', 'NZD', 'blue'], ['cyan', 'NZD', 'jpy'], ['none', 'NZD', 'red'],
    ['cyan', 'NZD', 'cad'], ['green', 'USD', 'cad'], ['green', 'USD', 'red'], ['green selected', 'USD', 'jpy'],
    ['green', 'USD', 'jpy'], ['green', 'USD', 'lime'], ['green', 'USD', 'red'], ['green', 'USD', 'aud'],
    ['none', 'XAU', '']
];
document.getElementById('rows').innerHTML = rows.map(([kind, base, quote]) =>
    `<div class="row ${kind}"><i class="mark-flag"></i><span class="pair">` +
    (quote ? `<i class="quote ${quote}"></i>` : '') +
    `<svg class="base ${quote ? '' : 'gold'}"><use href="#${base}"/></svg></span>${base}</div>`
).join('');
```
